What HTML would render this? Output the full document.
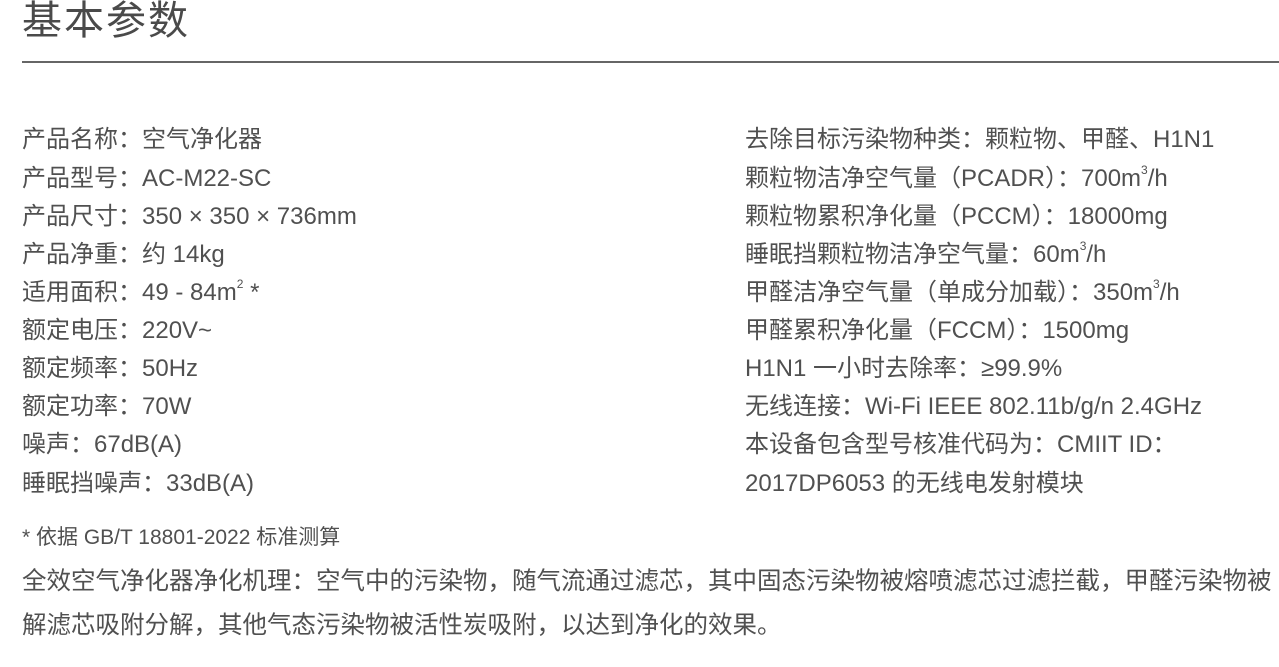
<!DOCTYPE html>
<html><head><meta charset="utf-8"><style>
body{margin:0;width:1279px;height:667px;overflow:hidden;background:#fff;font-family:"Liberation Sans","Noto Sans CJK SC",sans-serif;color:#505050;position:relative}
.t{position:absolute;left:22px;top:-4px;font-size:40px;letter-spacing:2px;line-height:50px;color:#4a4a4a}
.hr{position:absolute;left:22px;right:0;top:61px;height:2px;background:#666}
.r{position:absolute;font-size:24px;line-height:30px;white-space:nowrap}
.l{left:22px}.rt{left:745px}
sup{font-size:12px;vertical-align:top;line-height:12px}
.fn{position:absolute;left:22px;top:524px;font-size:21px;line-height:28px}
.p{position:absolute;left:22px;top:560px;font-size:24.5px;line-height:44px;white-space:nowrap}
</style></head><body>
<div class="t">基本参数</div>
<div class="hr"></div>
<div class="r l" style="top:125px">产品名称：空气净化器</div>
<div class="r l" style="top:164px">产品型号：AC-M22-SC</div>
<div class="r l" style="top:202px">产品尺寸：350 × 350 × 736mm</div>
<div class="r l" style="top:240px">产品净重：约 14kg</div>
<div class="r l" style="top:278px">适用面积：49 - 84m<sup>2</sup> *</div>
<div class="r l" style="top:316px">额定电压：220V~</div>
<div class="r l" style="top:354px">额定频率：50Hz</div>
<div class="r l" style="top:392px">额定功率：70W</div>
<div class="r l" style="top:430px">噪声：67dB(A)</div>
<div class="r l" style="top:469px">睡眠挡噪声：33dB(A)</div>
<div class="r rt" style="top:125px">去除目标污染物种类：颗粒物、甲醛、H1N1</div>
<div class="r rt" style="top:164px">颗粒物洁净空气量（PCADR）：700m<sup>3</sup>/h</div>
<div class="r rt" style="top:202px">颗粒物累积净化量（PCCM）：18000mg</div>
<div class="r rt" style="top:240px">睡眠挡颗粒物洁净空气量：60m<sup>3</sup>/h</div>
<div class="r rt" style="top:278px">甲醛洁净空气量（单成分加载）：350m<sup>3</sup>/h</div>
<div class="r rt" style="top:316px">甲醛累积净化量（FCCM）：1500mg</div>
<div class="r rt" style="top:354px">H1N1 一小时去除率：≥99.9%</div>
<div class="r rt" style="top:392px">无线连接：Wi-Fi IEEE 802.11b/g/n 2.4GHz</div>
<div class="r rt" style="top:430px">本设备包含型号核准代码为：CMIIT ID：</div>
<div class="r rt" style="top:469px">2017DP6053 的无线电发射模块</div>
<div class="fn">* 依据 GB/T 18801-2022 标准测算</div>
<div class="p">全效空气净化器净化机理：空气中的污染物，随气流通过滤芯，其中固态污染物被熔喷滤芯过滤拦截，甲醛污染物被<br>解滤芯吸附分解，其他气态污染物被活性炭吸附，以达到净化的效果。</div>
</body></html>
